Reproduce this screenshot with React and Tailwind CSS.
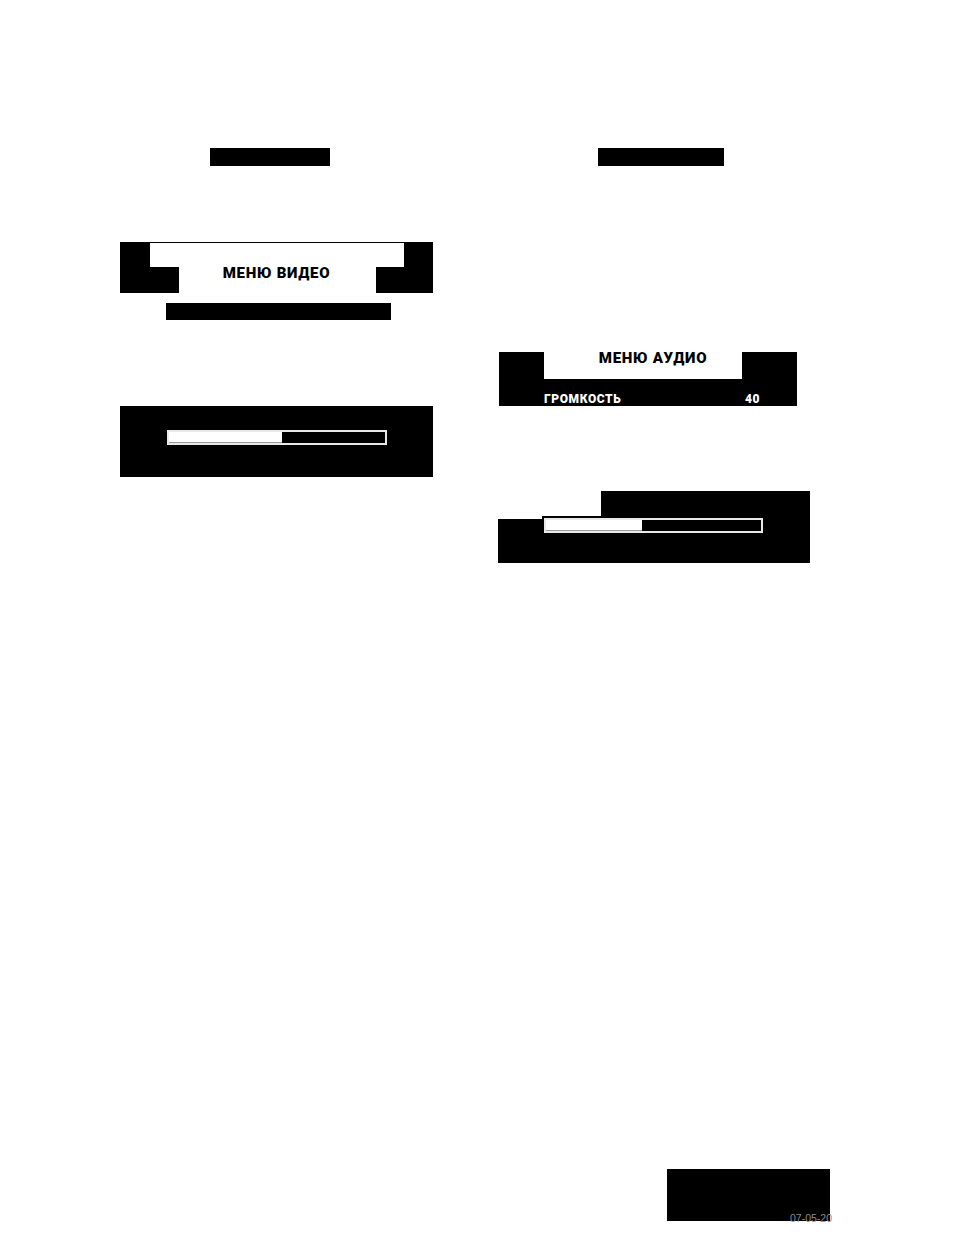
export default function App() {
  return (
    <div className="w-[954px] h-[1245px] bg-white font-['Liberation_Sans',Arial,sans-serif] overflow-hidden">
      <div className="flex pt-[148px] pl-[120px] gap-[65px] items-start">
        {/* Left column */}
        <div className="w-[313px] flex flex-col">
          <div className="ml-[90px] w-[120px] h-[18px] bg-black" />
          <div className="relative mt-[76px] h-[51px] bg-black flex flex-col pt-px">
            <div className="ml-[30px] mr-[29px] h-[24px] bg-white" />
            <div className="ml-[59px] mr-[57px] flex-1 bg-white" />
            <div className="absolute inset-x-0 top-[24px] text-center font-['Roboto',sans-serif] text-[15px] tracking-[0.7px] leading-none font-black text-black">
              МЕНЮ ВИДЕО
            </div>
          </div>
          <div className="mt-[10px] ml-[46px] w-[225px] h-[17px] bg-black" />
          <div className="mt-[86px] h-[71px] bg-black pt-[24px] pl-[47px]">
            <div className="w-[220px] h-[15px] border-2 border-[#e8e8e8] bg-black">
              <div className="w-[113px] h-full bg-white border-b border-[#999]" />
            </div>
          </div>
        </div>

        {/* Right column */}
        <div className="w-[312px] flex flex-col">
          <div className="ml-[100px] w-[126px] h-[18px] bg-black" />
          <div className="mt-[186px] ml-px w-[298px] h-[54px] bg-black flex flex-col">
            <div className="ml-[45px] w-[198px] h-[27px] bg-white pl-[20px] text-center">
              <div className="-mt-px font-['Roboto',sans-serif] text-[15px] tracking-[0.7px] leading-none font-black text-black">МЕНЮ АУДИО</div>
            </div>
            <div className="mt-[14px] ml-[45px] mr-[37px] flex justify-between font-['Roboto',sans-serif] text-[12px] tracking-[0.6px] leading-none font-black text-white">
              <span>ГРОМКОСТЬ</span>
              <span>40</span>
            </div>
          </div>
          <div className="relative mt-[85px] h-[72px] bg-black pt-[27px] pl-[46px]">
            <div className="absolute left-0 top-0 w-[103px] h-[25px] bg-white" />
            <div className="absolute left-0 top-0 w-[44px] h-[28px] bg-white" />
            <div className="relative w-[219px] h-[15px] border-2 border-[#e8e8e8] bg-black">
              <div className="w-[96px] h-full bg-white border-b border-[#999]" />
            </div>
          </div>
        </div>
      </div>

      <div className="relative mt-[606px] ml-[667px] w-[163px] h-[52px] bg-black">
        <div className="absolute left-[123px] top-[44px] text-[10.5px] leading-none text-[#8a8a8a] whitespace-nowrap">
          07-05-20
        </div>
      </div>
    </div>
  );
}
